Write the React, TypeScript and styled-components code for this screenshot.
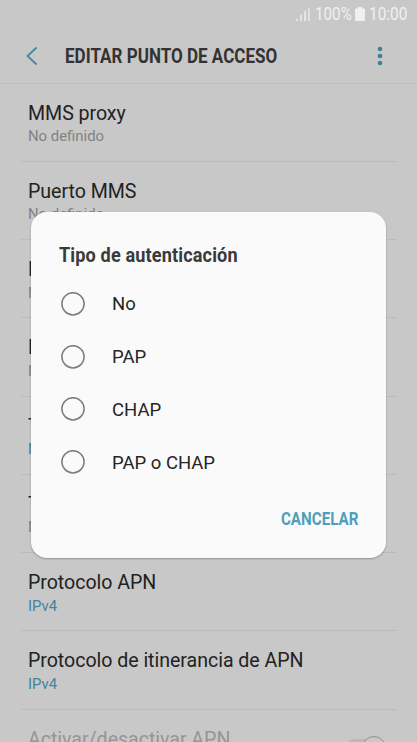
import React from 'react';
import styled, { createGlobalStyle } from 'styled-components';

const Global = createGlobalStyle`
  * { box-sizing: border-box; }
  html, body { margin: 0; padding: 0; overflow: hidden; }
  body { font-family: Roboto, sans-serif; background: #c8c8c8; }
`;

const Screen = styled.div`
  position: relative;
  width: 417px;
  height: 742px;
  overflow: hidden;
  background: #c8c8c8;
  display: flex;
  flex-direction: column;
`;

const StatusBar = styled.div`
  height: 28px;
  flex: none;
  display: flex;
  align-items: center;
  padding-left: 295px;
  color: #f0f0f0;
  font-size: 17.5px;
  line-height: 28px;
`;

const StatusIcon = styled.svg<{ $gap: number }>`
  flex: none;
  margin-right: ${p => p.$gap}px;
`;

const StatusText = styled.span<{ $width: number; $scale: number }>`
  width: ${p => p.$width}px;
  flex: none;
  white-space: nowrap;
  transform: scaleX(${p => p.$scale});
  transform-origin: left;
`;

const AppBar = styled.header`
  height: 55.5px;
  flex: none;
  display: flex;
  align-items: center;
  padding: 1px 32px 0 25px;
  border-bottom: 1px solid #c0c0c0;
`;

const Back = styled.svg`
  flex: none;
  margin-right: 26px;
`;

const Heading = styled.h1`
  flex: 1;
  margin: 1px 0 0;
  font-size: 20px;
  line-height: 24px;
  font-weight: 700;
  color: #333;
  white-space: nowrap;
  transform: scaleX(0.852);
  transform-origin: left;
`;

const List = styled.div`
  display: flex;
  flex-direction: column;
  padding: 0 21px;
`;

const Row = styled.div`
  height: 78.25px;
  flex: none;
  display: flex;
  justify-content: space-between;
  border-bottom: 1px solid #bbb;
  padding: 18px 7px 0;
`;

const RowTitle = styled.div<{ $muted?: boolean }>`
  font-size: 19.6px;
  letter-spacing: -0.04px;
  line-height: 24px;
  white-space: nowrap;
  color: ${p => (p.$muted ? '#959595' : '#222')};
`;

const RowValue = styled.div<{ $accent?: boolean }>`
  font-size: 14.9px;
  line-height: 18px;
  margin-top: 1.5px;
  color: ${p => (p.$accent ? '#43849d' : '#828282')};
`;

const Toggle = styled.svg`
  flex: none;
  margin-top: 7px;
`;

const Dialog = styled.div`
  position: absolute;
  left: 31px;
  top: 211.5px;
  width: 354.5px;
  height: 346px;
  border-radius: 16px;
  background: #fafafa;
  box-shadow: 0 1px 2px rgba(0, 0, 0, 0.28);
  display: flex;
  flex-direction: column;
  padding: 31px 27.5px 0 28px;
`;

const DialogTitle = styled.h2`
  margin: 0;
  height: 34.9px;
  font-size: 20px;
  line-height: 24px;
  font-weight: 700;
  color: #3a3a3a;
  white-space: nowrap;
  letter-spacing: 0.15px;
  transform: scaleX(0.905);
  transform-origin: left;
`;

const Option = styled.label`
  height: 52.75px;
  display: flex;
  align-items: center;
  font-size: 18.5px;
  line-height: 24px;
  color: #252525;
`;

const OptionText = styled.span`
  padding-top: 1.2px;
`;

const Radio = styled.svg`
  flex: none;
  margin: 0 27px 0 2px;
`;

const Cancel = styled.button`
  align-self: flex-end;
  margin: 18.5px 0 0;
  padding: 0;
  border: 0;
  background: none;
  font: 700 17.5px/24px Roboto, sans-serif;
  color: #4f9fbc;
  transform: scaleX(0.867);
  transform-origin: right;
`;

const rows = [
  { title: 'MMS proxy', value: 'No definido' },
  { title: 'Puerto MMS', value: 'No definido' },
  { title: 'MCC', value: 'No definido' },
  { title: 'MNC', value: 'No definido' },
  { title: 'Tipo de autenticación', value: 'No definido', accent: true },
  { title: 'Tipo de APN', value: 'No definido' },
  { title: 'Protocolo APN', value: 'IPv4', accent: true },
  { title: 'Protocolo de itinerancia de APN', value: 'IPv4', accent: true },
];

export default function App() {
  return (
    <Screen>
      <Global />
      <StatusBar>
        <StatusIcon $gap={5} width="15" height="14" viewBox="0 0 15 14" fill="#e6e6e6">
          <path d="M0 14L3 11V14ZM5 9L7 7V14H5ZM9 5L11 3V14H9ZM13 1L14.6 0V14H13Z" />
        </StatusIcon>
        <StatusText $width={40} $scale={0.87}>100%</StatusText>
        <StatusIcon $gap={4} width="10" height="14" viewBox="0 0 10 14" fill="#f0f0f0">
          <path d="M3 0H7V1.6H9Q10 1.6 10 2.6V13Q10 14 9 14H1Q0 14 0 13V2.6Q0 1.6 1 1.6H3Z" />
        </StatusIcon>
        <StatusText $width={40} $scale={0.88}>10:00</StatusText>
      </StatusBar>
      <AppBar>
        <Back width="14" height="20" viewBox="0 0 14 20" fill="none" stroke="#4389a2" strokeWidth="1.8">
          <path d="M11.5 1.5L2.5 10L11.5 18.5" />
        </Back>
        <Heading>EDITAR PUNTO DE ACCESO</Heading>
        <svg width="10" height="20" viewBox="0 0 10 20" fill="#3f819b">
          <circle cx="5" cy="3" r="2.3" />
          <circle cx="5" cy="10" r="2.3" />
          <circle cx="5" cy="17" r="2.3" />
        </svg>
      </AppBar>
      <List>
        {rows.map(r => (
          <Row key={r.title}>
            <div>
              <RowTitle>{r.title}</RowTitle>
              <RowValue $accent={r.accent}>{r.value}</RowValue>
            </div>
          </Row>
        ))}
        <Row>
          <RowTitle $muted>Activar/desactivar APN</RowTitle>
          <Toggle width="44" height="26" viewBox="0 0 44 26">
            <rect x="0" y="4" width="40" height="18" rx="9" fill="#b9b9b9" />
            <circle cx="29" cy="13" r="11.5" fill="#c8c8c8" stroke="#929292" />
          </Toggle>
        </Row>
      </List>
      <Dialog role="dialog">
        <DialogTitle>Tipo de autenticación</DialogTitle>
        {['No', 'PAP', 'CHAP', 'PAP o CHAP'].map(o => (
          <Option key={o}>
            <Radio width="24" height="24" viewBox="0 0 24 24" fill="none" stroke="#7c7c7c" strokeWidth="1.5">
              <circle cx="12" cy="11.8" r="11.1" />
            </Radio>
            <OptionText>{o}</OptionText>
          </Option>
        ))}
        <Cancel>CANCELAR</Cancel>
      </Dialog>
    </Screen>
  );
}
